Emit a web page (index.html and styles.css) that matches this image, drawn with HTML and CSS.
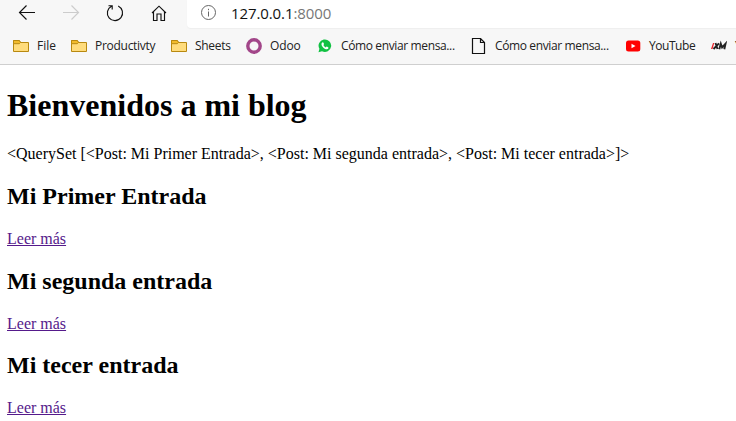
FILE: index.html
```html
<!DOCTYPE html>
<html lang="es">
<head>
<meta charset="utf-8">
<title>Bienvenidos a mi blog</title>
<link rel="stylesheet" href="styles.css">
</head>
<body>
<header class="browser">
  <div class="toolbar">
    <nav class="nav">
      <svg width="18" height="20" viewBox="0 0 18 20"><path d="M17 9.5H1.5M8.5 2.5l-7 7 7 7"/></svg>
      <svg class="disabled" width="18" height="20" viewBox="0 0 18 20"><path d="M1 9.500h15.500M9.500 2.500l7 7-7 7"/></svg>
      <svg width="18" height="20" viewBox="0 0 18 20"><path d="M12.200 3.100A7.600 7.600 0 1 1 5.500 3.200M2.500 2.700h3.700v3.700"/></svg>
      <svg width="18" height="20" viewBox="0 0 18 20"><path d="M2 10 9 3.200l7 6.800M3.500 8.800v8.700H7v-6.500h4v6.500h3.500V8.800"/></svg>
    </nav>
    <div class="address">
      <svg width="16" height="16" viewBox="0 0 16 16"><circle cx="7.500" cy="7.500" r="7"/><path d="M7.500 6.500v5M7.500 3.800v1.400"/></svg>
      <span class="url">127.0.0.1<span class="port">:8000</span></span>
    </div>
  </div>
  <div class="bookmarks">
    <div class="bookmark file"><svg width="16" height="16" viewBox="0 0 16 16"><path class="folder" d="M.5 2.5h5.8l1.2 2h8v9H.5z"/><path class="tab" d="M.5 5.7V2.5h5.8l1.2 2-1.2 1.2z"/></svg><span>File</span></div>
    <div class="bookmark productivity"><svg width="16" height="16" viewBox="0 0 16 16"><path class="folder" d="M.5 2.5h5.8l1.2 2h8v9H.5z"/><path class="tab" d="M.5 5.7V2.5h5.8l1.2 2-1.2 1.2z"/></svg><span>Productivty</span></div>
    <div class="bookmark sheets"><svg width="16" height="16" viewBox="0 0 16 16"><path class="folder" d="M.5 2.5h5.8l1.2 2h8v9H.5z"/><path class="tab" d="M.5 5.7V2.5h5.8l1.2 2-1.2 1.2z"/></svg><span>Sheets</span></div>
    <div class="bookmark odoo"><svg width="16" height="16" viewBox="0 0 16 16"><circle class="ring" cx="8" cy="8" r="6.200"/></svg><span>Odoo</span></div>
    <div class="bookmark como"><svg width="16" height="16" viewBox="0 0 16 16"><path class="whatsapp" d="M1.500 14.300l.9-3.500A6.300 6.300 0 1 1 5 13.300z"/><path class="phone" d="M4.800 4.900c.7-.9 1.500-.8 1.800.1l.4 1c.1.4-.5.9-.7 1.100.6 1.100 1.400 1.800 2.500 2.300.4-.4.7-1 1.100-.8l1.500.8c.3.8-.5 1.700-1.500 1.800C7.100 11.200 3.300 7.300 4.800 4.900z"/></svg><span>Cómo enviar mensa...</span></div>
    <div class="bookmark como"><svg width="16" height="16" viewBox="0 0 16 16"><path class="sheet" d="M1.500.500h8l4 4v11h-12zM9.500.500v4h4"/></svg><span>Cómo enviar mensa...</span></div>
    <div class="bookmark youtube"><svg width="16" height="16" viewBox="0 0 16 16"><rect class="tube" x="1" y="2.500" width="14.300" height="11" rx="2.500"/><path class="play" d="M6.500 5.800v4.400l4-2.200z"/></svg><span>YouTube</span></div>
    <div class="bookmark xm"><svg width="16" height="16" viewBox="0 0 16 16"><path class="xm-red" d="M2 5h1.300L1.500 11H0z"/><path class="xm-dark" d="M2.500 11l5.500-5.700M4.500 5l2 6M8.300 11.300l1.500-5.500 1.300 3.700 3.400-3.700-1.200 5.500"/></svg><span>Y</span></div>
  </div>
</header>
<main>
  <h1>Bienvenidos a mi blog</h1>
  <p class="query">&lt;QuerySet [&lt;Post: Mi Primer Entrada&gt;, &lt;Post: Mi segunda entrada&gt;, &lt;Post: Mi tecer entrada&gt;]&gt;</p>
  <h2>Mi Primer Entrada</h2>
  <p><a href="#">Leer más</a></p>
  <h2>Mi segunda entrada</h2>
  <p><a href="#">Leer más</a></p>
  <h2 class="third">Mi tecer entrada</h2>
  <p><a href="#">Leer más</a></p>
</main>
</body>
</html>
```
FILE: styles.css
```css
body { margin: 0; background: #fff; overflow: hidden; }
.browser { height: 64px; background: #f7f7f7; border-bottom: 1px solid #cfcfcf; overflow: hidden; font-family: "Open Sans", "Noto Sans", sans-serif; }
.toolbar { display: flex; height: 28px; }
.nav { display: flex; gap: 26px; width: 169px; padding: 3px 0 0 18px; }
svg { flex: none; fill: none; }
.nav svg { stroke: #111; stroke-width: 1.15; }
.nav .disabled { stroke: #ccc; }
.address { display: flex; align-items: center; flex: 1; height: 28px; background: #fff; border-radius: 0 0 0 4px; padding: 0 0 2px 14px; box-shadow: 0 1px 1px #eee; box-sizing: border-box; }
.address svg { stroke: #666; stroke-width: 1; }
.url { margin-left: 14px; font-size: 15px; letter-spacing: -.1px; color: #111; }
.port { color: #777; }
.bookmarks { display: flex; height: 36px; padding-left: 13px; }
.bookmark { display: flex; flex: none; align-items: center; gap: 8px; font-size: 12px; color: #222; white-space: nowrap; }
.bookmark span { padding-bottom: 1px; }
.file { width: 58px; }
.productivity { width: 100px; letter-spacing: -.28px; }
.sheets { width: 75px; letter-spacing: -.3px; }
.odoo { width: 71px; letter-spacing: -.1px; }
.como { width: 154px; letter-spacing: -.37px; }
.youtube { width: 86px; letter-spacing: -.45px; }
.folder { fill: #ffdc7c; stroke: #b88910; }
.tab { fill: #f2bb2c; stroke: #b88910; }
.ring { stroke: #a24689; stroke-width: 3.4; }
.whatsapp { fill: #12c143; }
.phone { fill: #fff; }
.sheet { stroke: #111; stroke-width: 1.2; }
.tube { fill: #f00; }
.play { fill: #fff; }
.xm-red { fill: #e8242b; }
.xm-dark { stroke: #222; stroke-width: 1.9; }
main { padding: 0 7px; font-family: "Liberation Serif", serif; font-size: 16px; color: #000; display: flow-root; }
h1 { margin: 22px 0 21px; font-size: 32px; line-height: 37px; }
h2 { margin: 20px 0; font-size: 24px; line-height: 27px; }
.third { margin-top: 19px; }
p { margin: 16px 0; line-height: 18px; }
a { color: #551a8b; }
```
